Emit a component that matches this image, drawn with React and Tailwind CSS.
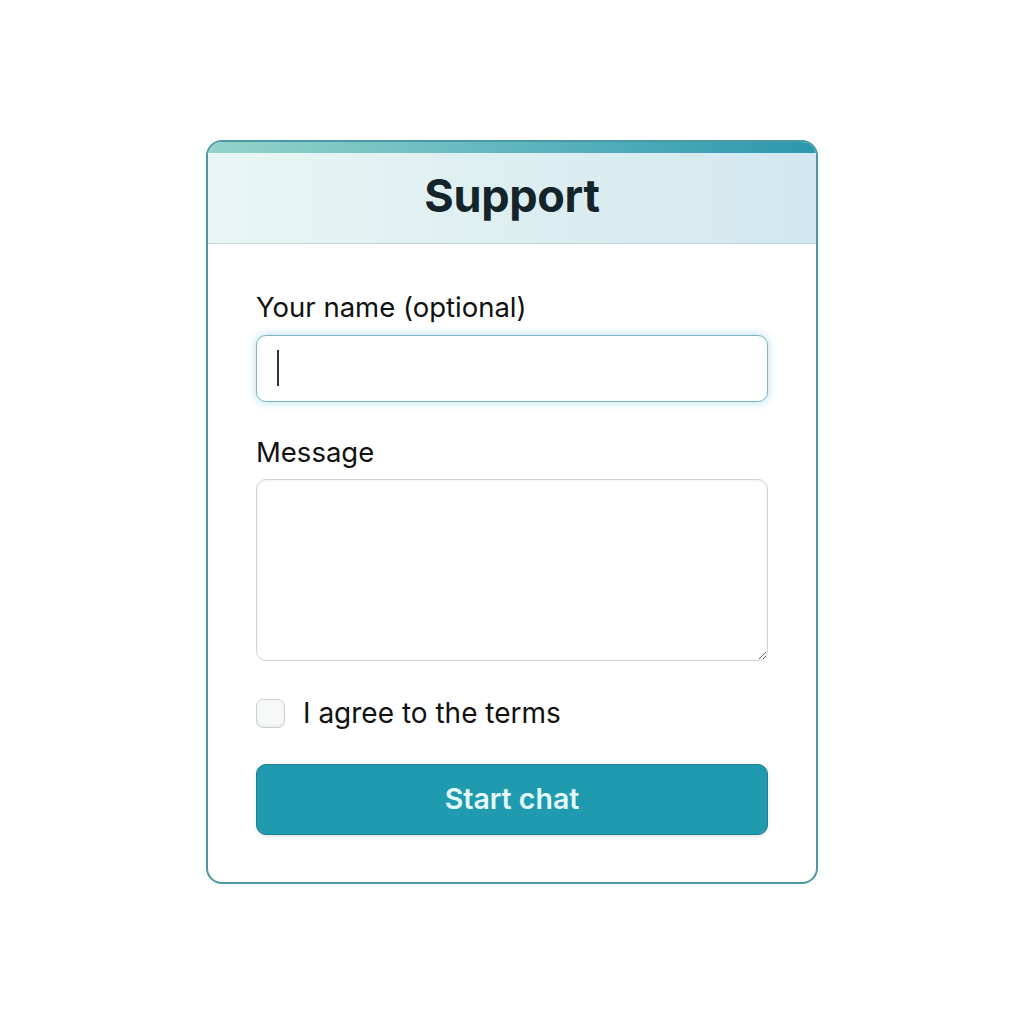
import { useState } from "react";

export default function App() {
  const [name, setName] = useState("");
  const [message, setMessage] = useState("");
  const [agree, setAgree] = useState(false);

  return (
    <div
      className="min-h-screen bg-white pt-[140px] pb-10"
      style={{ fontFamily: "Inter, 'Noto Sans', sans-serif" }}
    >
      <div className="mx-auto w-[612px] rounded-[16px] border-2 border-[#4a98a3] bg-white overflow-hidden">
        {/* header */}
        <div className="h-[11px] bg-gradient-to-r from-[#95d3c9] via-[#5fb6bf] to-[#2a97ad]" />
        <div className="flex h-[91px] items-center justify-center border-b border-[#bcd6da] bg-gradient-to-r from-[#e9f6f3] to-[#d2e7ef]">
          <h1 className="text-[45px] font-bold tracking-[-0.3px] text-[#13242a] -mt-[4px]">
            Support
          </h1>
        </div>

        {/* body */}
        <form className="px-[48px] pt-[47px] pb-[47px]" onSubmit={(e) => e.preventDefault()}>
          <label className="block text-[27.5px] leading-[32px] text-[#111]">
            Your name (optional)
          </label>
          <div className="relative mt-[12px]">
            <input
              value={name}
              onChange={(e) => setName(e.target.value)}
              className="h-[67px] w-full rounded-[10px] border-[1.5px] border-[#78b6c2] bg-white px-5 text-[22px] outline-none shadow-[0_0_7px_2px_rgba(110,195,215,0.35)]"
            />
            {name === "" && (
              <span className="absolute left-[21px] top-[15px] h-[36px] w-[1.5px] bg-[#333]" />
            )}
          </div>

          <label className="mt-[34px] block text-[27.5px] leading-[32px] text-[#111]">
            Message
          </label>
          <textarea
            value={message}
            onChange={(e) => setMessage(e.target.value)}
            className="mt-[11px] block h-[182px] w-full rounded-[10px] border-[1.5px] border-[#cfd3d5] bg-white px-4 py-3 text-[20px] outline-none shadow-[inset_0_1px_3px_rgba(0,0,0,0.06)]"
          />

          <label className="mt-[36px] flex items-center gap-[18px] cursor-pointer">
            <input
              type="checkbox"
              checked={agree}
              onChange={(e) => setAgree(e.target.checked)}
              className="h-[29px] w-[29px] appearance-none rounded-[7px] border-[1.5px] border-[#cbcfd1] bg-[#f7f8f8] shadow-[inset_0_-2px_3px_rgba(0,0,0,0.05)] checked:bg-[#1e98ab]"
            />
            <span className="text-[28px] leading-[32px] text-[#111]">I agree to the terms</span>
          </label>

          <button
            type="submit"
            className="mt-[35px] h-[71px] w-full rounded-[10px] border-[1.5px] border-[#1a7f8f] bg-[#1f9aae] text-[28.5px] font-semibold text-[#e4fafc] shadow-[0_2px_4px_rgba(0,0,0,0.1)]"
          >
            Start chat
          </button>
        </form>
      </div>
    </div>
  );
}
